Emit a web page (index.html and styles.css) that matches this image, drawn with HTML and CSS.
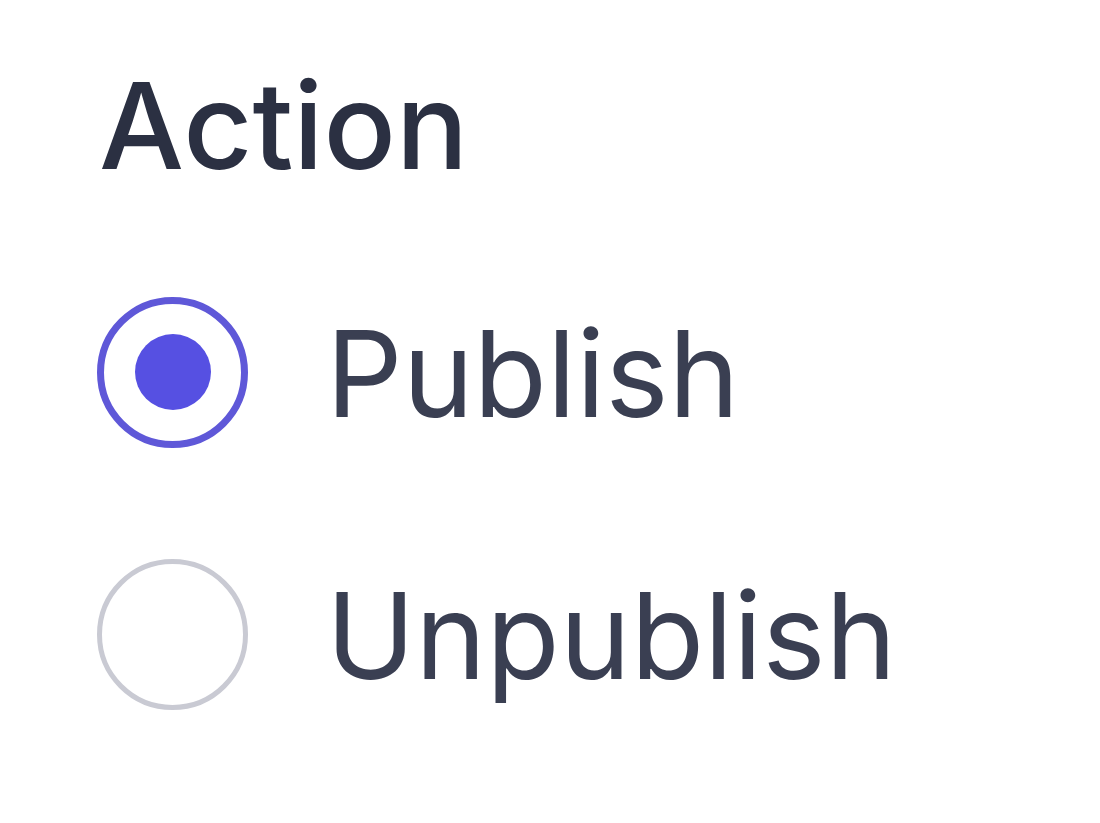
FILE: index.html
```html
<!DOCTYPE html>
<html lang="en">
<head>
<meta charset="utf-8">
<title>Action</title>
<link rel="stylesheet" href="styles.css">
</head>
<body>
  <fieldset class="field">
    <legend class="field-label">Action</legend>
    <div class="options">
      <label class="option">
        <span class="radio radio-checked"><span class="radio-dot"></span></span>
        <span class="option-text">Publish</span>
      </label>
      <label class="option">
        <span class="radio"></span>
        <span class="option-text">Unpublish</span>
      </label>
    </div>
  </fieldset>
</body>
</html>
```

FILE: styles.css
```css
html, body {
  margin: 0;
  padding: 0;
  background: #ffffff;
}

body {
  font-family: Inter, "Liberation Sans", sans-serif;
  width: 1100px;
  height: 823px;
  overflow: hidden;
}

.field {
  margin: 0;
  padding: 54px 0 0 97px;
  border: 0;
  display: flex;
  flex-direction: column;
}

.field-label {
  display: block;
  padding: 0;
  margin: 0 0 104px 2px;
  font-size: 120px;
  line-height: 144px;
  font-weight: 500;
  color: #2b3042;
  float: left;
  width: 100%;
}

.options {
  display: flex;
  flex-direction: column;
  gap: 118px;
  clear: both;
}

.option {
  display: flex;
  align-items: center;
  gap: 78px;
  height: 144px;
}

.radio {
  box-sizing: border-box;
  width: 151px;
  height: 151px;
  border-radius: 50%;
  border: 5px solid #c9cad3;
  display: flex;
  align-items: center;
  justify-content: center;
  flex-shrink: 0;
  position: relative;
  top: -2px;
}

.radio-checked {
  border: 7px solid #5f58d8;
}

.radio-dot {
  width: 76px;
  height: 76px;
  border-radius: 50%;
  background: #5650e2;
}

.option-text {
  font-size: 120px;
  line-height: 144px;
  font-weight: 400;
  color: #3a3f52;
}
```
